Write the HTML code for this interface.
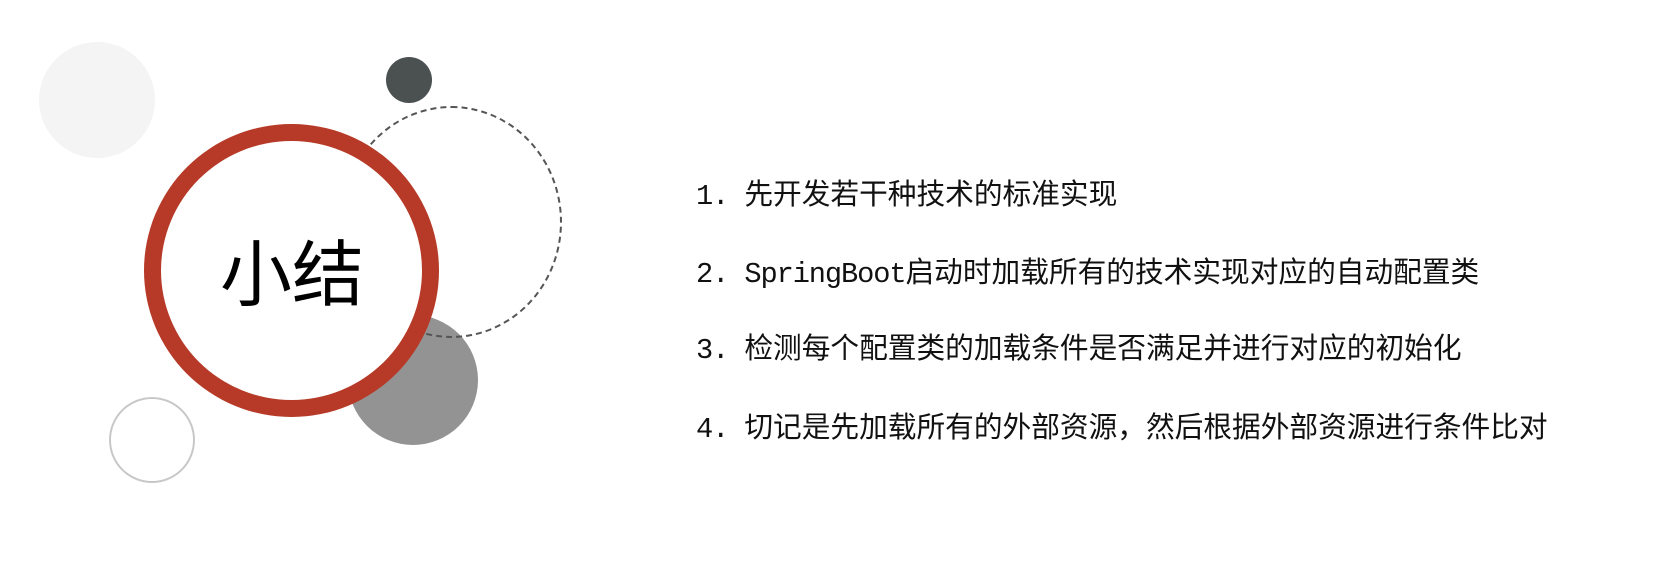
<!DOCTYPE html>
<html><head><meta charset="utf-8"><style>
html,body{margin:0;padding:0;background:#fff;width:1665px;height:567px;overflow:hidden;position:relative}
.c{position:absolute;border-radius:50%;box-sizing:border-box}
.t{position:absolute;left:696px;font-family:"Liberation Mono","Noto Sans CJK SC",monospace;font-size:28.7px;color:#111;white-space:pre;line-height:30px}
.l{letter-spacing:-1.1px}
</style></head><body>
<div class="c" style="left:39px;top:42px;width:116px;height:116px;background:#f4f4f4"></div>
<div class="c" style="left:386px;top:57px;width:46px;height:46px;background:#4b5051"></div>
<div class="c" style="left:348px;top:315px;width:130px;height:130px;background:#939393"></div>
<div class="c" style="left:341px;top:106px;width:221px;height:232px;border:2px dashed #555"></div>
<div class="c" style="left:109px;top:397px;width:86px;height:86px;border:2px solid #c8c8c8"></div>
<div class="c" style="left:144px;top:124px;width:295px;height:293px;border:17px solid #b63a27;background:#fff"></div>
<div style="position:absolute;left:212px;top:236px;width:160px;text-align:center;font-family:'Liberation Sans','Noto Sans CJK SC',sans-serif;font-size:72px;line-height:80px;color:#000">小结</div>
<div class="t" style="top:182px"><span class="l">1. </span>先开发若干种技术的标准实现</div>
<div class="t" style="top:260px"><span class="l">2. SpringBoot</span>启动时加载所有的技术实现对应的自动配置类</div>
<div class="t" style="top:336px"><span class="l">3. </span>检测每个配置类的加载条件是否满足并进行对应的初始化</div>
<div class="t" style="top:415px"><span class="l">4. </span>切记是先加载所有的外部资源，然后根据外部资源进行条件比对</div>
</body></html>
